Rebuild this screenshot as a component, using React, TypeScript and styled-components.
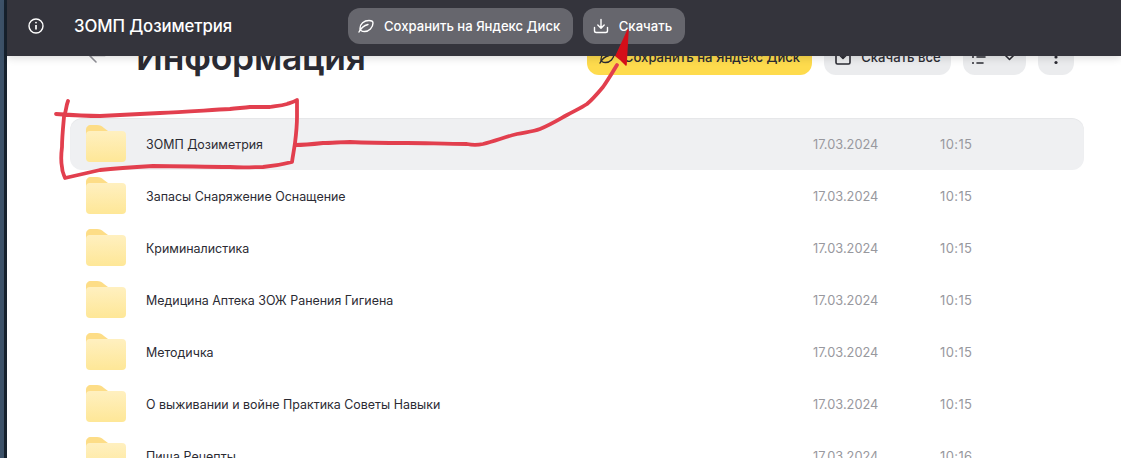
import React from "react";
import styled, { createGlobalStyle } from "styled-components";

const Global = createGlobalStyle`
  html, body { margin: 0; padding: 0; background: #fff; }
  body { font-family: Inter, "Noto Sans", "Liberation Sans", sans-serif; }
`;

const Frame = styled.div`
  position: relative;
  width: 1121px;
  height: 458px;
  overflow: hidden;
  display: flex;
  background: #fff;
`;

const WindowEdge = styled.div`
  width: 7px;
  flex: none;
  background: linear-gradient(to right, #3d5269 0 4px, #17222e 4px 7px);
`;

const Page = styled.main`
  flex: 1;
  min-width: 0;
  padding: 31px 37px 0 63px;
`;

const TopBar = styled.header`
  position: absolute;
  left: 7px;
  top: 0;
  right: 0;
  height: 56px;
  box-sizing: border-box;
  background: #34343c;
  box-shadow: 0 2px 8px rgba(0, 0, 0, 0.14);
  display: flex;
  align-items: center;
  padding: 0 0 4px 21px;
  color: #fff;
  z-index: 2;
`;

const BarTitle = styled.div`
  font-size: 16.8px;
  font-weight: 500;
  margin-left: 30px;
  width: 274px;
  letter-spacing: -0.1px;
`;

const BarButton = styled.div`
  height: 36px;
  border-radius: 12px;
  background: #66666d;
  display: flex;
  align-items: center;
  gap: 10px;
  padding: 0 12.5px 0 10px;
  font-size: 13.1px;
  font-weight: 500;
  white-space: nowrap;
  margin-right: 10px;
`;

const Heading = styled.div`
  height: 44px;
  display: flex;
  align-items: flex-start;
  margin-bottom: 43px;
  padding-right: 10px;
`;

const BackArrow = styled.svg`
  width: 20px;
  height: 20px;
  margin: 15px 29px 0 17px;
  flex: none;
`;

const Title = styled.h1`
  margin: 0;
  font-size: 35.4px;
  line-height: 54px;
  font-weight: 600;
  color: #2b2b33;
  flex: 1;
  white-space: nowrap;
  letter-spacing: -0.2px;
`;

const ActionGroup = styled.div`
  display: flex;
  gap: 12px;
  padding-top: 8px;
`;

const Action = styled.div<{ $w: number; $primary?: boolean }>`
  width: ${(p) => p.$w}px;
  height: 36px;
  border-radius: 12px;
  background: ${(p) => (p.$primary ? "#fedb4d" : "#ebecee")};
  color: #2b2b33;
  font-size: 13.1px;
  font-weight: 500;
  display: flex;
  align-items: center;
  justify-content: center;
  gap: 9px;
  white-space: nowrap;
`;

const List = styled.div`
  display: flex;
  flex-direction: column;
`;

const Row = styled.div<{ $active?: boolean }>`
  height: 52px;
  flex: none;
  border-radius: 12px;
  background: ${(p) => (p.$active ? "#eff0f2" : "transparent")};
  display: flex;
  align-items: center;
  padding-left: 16px;
  font-size: 12.45px;
  color: #2b2b33;
  box-sizing: border-box;
  box-shadow: ${(p) => (p.$active ? "inset 0 1px 1px rgba(0,0,0,0.04)" : "none")};
`;

const Name = styled.div`
  width: 667px;
  margin-left: 20px;
  white-space: nowrap;
`;

const DateCell = styled.div`
  width: 127px;
  color: #98989e;
  font-size: 12.8px;
`;

const TimeCell = styled.div`
  width: 60px;
  color: #98989e;
  font-size: 13px;
  letter-spacing: 0.4px;
`;

const Ink = styled.svg`
  position: absolute;
  left: 0;
  top: 0;
  width: 1121px;
  height: 458px;
  pointer-events: none;
  z-index: 3;
  filter: blur(0.5px);
`;

const FolderIcon = () => (
  <svg width="40" height="38" viewBox="0 0 40 38" style={{ flex: "none" }}>
    <defs>
      <linearGradient id="fg" x1="0" y1="0" x2="0" y2="1">
        <stop offset="0" stopColor="#fff0c0" />
        <stop offset="1" stopColor="#fee797" />
      </linearGradient>
    </defs>
    <path d="M0 5C0 2 2 0 5 0h6c3 0 5 1 7 3l4 3v10H0z" fill="#fddd87" />
    <rect x="0" y="6" width="40" height="31" rx="4" fill="url(#fg)" />
  </svg>
);

const InfoIcon = () => (
  <svg width="16" height="16" viewBox="0 0 16 16" fill="none" stroke="#fff" strokeWidth="1.4" style={{ flex: "none" }}>
    <circle cx="8" cy="8" r="7" />
    <path d="M8 7v4.5" strokeWidth="1.7" />
    <circle cx="8" cy="4.6" r="0.9" fill="#fff" stroke="none" />
  </svg>
);

const LeafIcon = ({ color }: { color: string }) => (
  <svg width="16" height="14" viewBox="0 0 16 14" fill="none" stroke={color} strokeWidth="1.4" strokeLinecap="round" strokeLinejoin="round" style={{ flex: "none" }}>
    <path d="M2 9.500C2 5 6 1.500 11 1.500c2.500 0 4 1 4 2.500 0 4.500-4 8.500-8.500 8.500C3.800 12.500 2 11.500 2 9.500z" />
    <path d="M1 13c2-4 5-6.500 9-7.500" />
  </svg>
);

const DownloadIcon = () => (
  <svg width="16" height="16" viewBox="0 0 16 16" fill="none" stroke="#fff" strokeWidth="1.4" strokeLinecap="round" strokeLinejoin="round" style={{ flex: "none" }}>
    <path d="M8 1.500v8.500M4.800 7l3.200 3.200L11.200 7" />
    <path d="M1.500 9.500v3.200c0 1 .8 1.800 1.800 1.800h9.400c1 0 1.800-.8 1.800-1.800V9.500" />
  </svg>
);

const SaveAllIcon = () => (
  <svg width="18" height="18" viewBox="0 0 18 18" fill="none" stroke="#2b2b33" strokeWidth="1.6" strokeLinecap="round" strokeLinejoin="round" style={{ flex: "none" }}>
    <path d="M5 3H3.500C2.700 3 2 3.700 2 4.500v10c0 .8.7 1.500 1.500 1.500h11c.8 0 1.500-.7 1.500-1.500v-10c0-.8-.7-1.500-1.500-1.500H13" />
    <path d="M9 2v8M6 7.500 9 10.500l3-3" />
  </svg>
);

const SortIcon = () => (
  <svg width="48" height="20" viewBox="0 0 48 20" fill="none" stroke="#2b2b33" strokeWidth="1.6" strokeLinecap="round" strokeLinejoin="round">
    <path d="M6 4h10M6 10h8M6 16h6" />
    <circle cx="2" cy="4" r="1" fill="#2b2b33" stroke="none" />
    <circle cx="2" cy="10" r="1" fill="#2b2b33" stroke="none" />
    <circle cx="2" cy="16" r="1" fill="#2b2b33" stroke="none" />
    <path d="M33 7l5.500 5.500L44 7" />
  </svg>
);

const DotsIcon = () => (
  <svg width="4" height="16" viewBox="0 0 4 16" fill="#2b2b33">
    <circle cx="2" cy="2.500" r="1.600" />
    <circle cx="2" cy="8" r="1.600" />
    <circle cx="2" cy="13.500" r="1.600" />
  </svg>
);

const rows = [
  { name: "ЗОМП Дозиметрия", time: "10:15", active: true },
  { name: "Запасы Снаряжение Оснащение", time: "10:15" },
  { name: "Криминалистика", time: "10:15" },
  { name: "Медицина Аптека ЗОЖ Ранения Гигиена", time: "10:15" },
  { name: "Методичка", time: "10:15" },
  { name: "О выживании и войне Практика Советы Навыки", time: "10:15" },
  { name: "Пища Рецепты", time: "10:16" },
];

export default function App() {
  return (
    <Frame>
      <Global />
      <WindowEdge />
      <Page>
        <Heading>
          <BackArrow viewBox="0 0 20 20" fill="none" stroke="#8f8f96" strokeWidth="1.6" strokeLinecap="round" strokeLinejoin="round">
            <path d="M9 3 2.500 9.500 9 16M3 9.500h15" />
          </BackArrow>
          <Title>Информация</Title>
          <ActionGroup>
            <Action $w={225} $primary>
              <LeafIcon color="#2b2b33" />
              Сохранить на Яндекс Диск
            </Action>
            <Action $w={127}>
              <SaveAllIcon />
              Скачать все
            </Action>
            <Action $w={63}>
              <SortIcon />
            </Action>
            <Action $w={36}>
              <DotsIcon />
            </Action>
          </ActionGroup>
        </Heading>
        <List>
          {rows.map((r) => (
            <Row key={r.name} $active={r.active}>
              <FolderIcon />
              <Name>{r.name}</Name>
              <DateCell>17.03.2024</DateCell>
              <TimeCell>{r.time}</TimeCell>
            </Row>
          ))}
        </List>
      </Page>
      <TopBar>
        <InfoIcon />
        <BarTitle>ЗОМП Дозиметрия</BarTitle>
        <BarButton>
          <LeafIcon color="#fff" />
          Сохранить на Яндекс Диск
        </BarButton>
        <BarButton>
          <DownloadIcon />
          Скачать
        </BarButton>
      </TopBar>
      <Ink viewBox="0 0 1121 458" fill="none" stroke="#e23f4e" strokeWidth="3.800" strokeLinecap="round" strokeLinejoin="round">
        <path d="M68 101C66 106 66 112 64 117C63 128 62 138 62 147C61 155 61 162 62 167C62 172 64 175 65 178L100 170C118 168 135 167 153 166C180 166 205 167 230 167C245 168 255 167 263 167C275 166 284 164 292 162C293 155 294 150 295 143C296 135 297 125 297 117C297 110 297 105 297 100C294 102 290 103 287 104C280 106 275 106 270 107C263 107 257 107 250 107C243 108 237 108 230 109C210 110 185 112 160 113C140 114 120 115 100 116C85 116 70 115 56 114" />
        <path d="M295 145C305 145 314 144 323 143C332 143 341 142 350 142C370 143 388 143 407 143C425 143 445 144 467 144C472 145 478 145 483 144C495 141 505 137 517 134C525 132 532 132 540 129C550 125 558 120 567 115C574 111 581 108 587 104C593 99 598 93 603 87C608 80 612 73 617 65" />
        <path d="M616 56 628 30 626 65 621 60z" stroke="#d50e1a" fill="#d50e1a" strokeWidth="1.500" />
      </Ink>
    </Frame>
  );
}
